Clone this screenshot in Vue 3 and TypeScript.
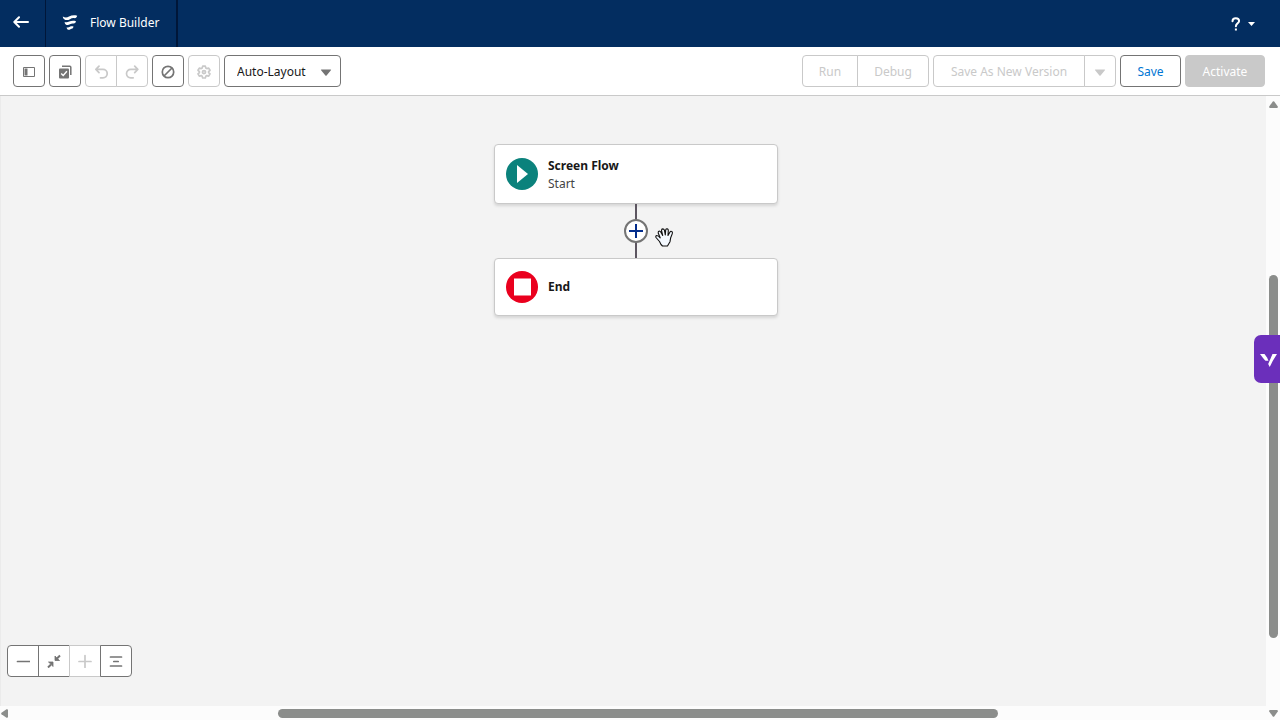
<script setup lang="ts">
import { ref } from 'vue'

const layout = ref('auto')
</script>

<template>
  <div class="app">
    <header class="header">
      <button class="back" type="button" aria-label="Back">
        <svg width="16" height="12" viewBox="0 0 16 12" fill="none" stroke="#fff" stroke-width="2" stroke-linecap="round" stroke-linejoin="round">
          <path d="M15 6H1.5M6 1.2 1.3 6 6 10.8" />
        </svg>
      </button>
      <div class="brand">
        <svg width="16" height="16" viewBox="0 0 16 16" fill="#fff">
          <path d="M.8 1.500C3 2.800 5 2.600 7 1.500 9.500.300 12 0 15.200.7 14.800 2.300 14 3.100 12.800 3.200 11 2.800 9.500 3.200 8 4.200 6 5.400 3.500 5.300 2.200 4.200 1.300 3.500.9 2.600.8 1.500Z" />
          <path d="M2.600 6.900C4.200 7.700 5.700 7.400 7.200 6.600 9.200 5.700 11.500 5.500 14 6.200 13.600 7.700 12.800 8.400 11.700 8.500 10.200 8.200 9.200 8.600 8 9.300 6.300 10.300 4.800 10.100 3.700 9.400 3 8.800 2.700 8 2.600 6.900Z" />
          <path d="M4.700 12.200C5.800 12.700 6.800 12.300 7.900 11.700 9 11.200 10.200 11.100 11.500 11.500 11.200 12.900 10.700 13.500 9.900 13.700 9 13.700 8.500 14.200 7.500 14.700 6.700 15 5.900 14.900 5.400 14.300 4.900 13.700 4.700 13 4.700 12.200Z" />
        </svg>
        <h1>Flow Builder</h1>
      </div>
      <button class="help" type="button" aria-label="Help">
        <svg width="10" height="14" viewBox="0 0 10 14" fill="none" stroke="#fff" stroke-width="2">
          <path d="M1.500 4.200C1.500 2.400 2.900 1.200 4.800 1.200s3.300 1.100 3.300 2.800c0 2.300-3.200 2.500-3.200 5.300" stroke-linecap="round" />
          <path d="M4.900 11.500v2" />
        </svg>
        <svg width="7" height="4" viewBox="0 0 7 4" fill="#fff"><path d="M0 0h7L3.500 4Z" /></svg>
      </button>
    </header>

    <div class="toolbar">
      <button class="btn icon" type="button" aria-label="Toggle Toolbox">
        <svg width="12" height="10" viewBox="0 0 12 10"><path d="M.5.500h11v9H.5Z" fill="none" stroke="#747474" /><path d="M1.500 1.500h3v7h-3Z" fill="#747474" /></svg>
      </button>
      <button class="btn icon" type="button" aria-label="Select Elements">
        <svg width="14" height="14" viewBox="0 0 14 14">
          <path d="M4 1.200h7.800a1 1 0 0 1 1 1V10" fill="none" stroke="#747474" stroke-width="1.500" />
          <rect x="1" y="3.500" width="10" height="10" rx="1" fill="#747474" />
          <path d="m3.200 8.500 2 2 3.700-4.200" fill="none" stroke="#fff" stroke-width="1.400" />
        </svg>
      </button>
      <div class="group">
        <button class="btn icon" type="button" disabled aria-label="Undo">
          <svg width="14" height="14" viewBox="0 0 14 14" fill="none" stroke="#c9c9c9" stroke-width="1.700" stroke-linecap="round" stroke-linejoin="round"><path d="M5 1.200 1.900 4.400 5 7.600M2.200 4.400H9a4.200 4.200 0 0 1 0 8.400H6.500" /></svg>
        </button>
        <button class="btn icon" type="button" disabled aria-label="Redo">
          <svg width="14" height="14" viewBox="0 0 14 14" fill="none" stroke="#c9c9c9" stroke-width="1.700" stroke-linecap="round" stroke-linejoin="round"><path d="m9.700 1.200 3.100 3.200-3.100 3.200M12.500 4.400H5.700a4.200 4.200 0 0 0 0 8.400h2.500" /></svg>
        </button>
      </div>
      <button class="btn icon" type="button" aria-label="Show Errors">
        <svg width="14" height="14" viewBox="0 0 14 14" fill="none" stroke="#747474" stroke-width="1.700"><circle cx="7" cy="7" r="5.700" /><path d="m3 11 8-8" /></svg>
      </button>
      <button class="btn icon" type="button" disabled aria-label="View Properties">
        <svg width="14" height="14" viewBox="0 0 14 14" fill="none" stroke="#c9c9c9" stroke-linejoin="round">
          <path d="M5.700 1.100h2.600l.5 1.900 1 .6 1.900-.5L13 5.300 11.600 6.700v.9L13 8.900l-1.300 2.200-1.900-.5-1 .6-.5 1.800H5.700l-.5-1.800-1-.6-1.900.5L1 8.900l1.400-1.300v-.9L1 5.300l1.300-2.200 1.900.5 1-.6Z" stroke-width="1.700" />
          <circle cx="7" cy="7.100" r="1.500" stroke-width="1.800" />
        </svg>
      </button>
      <div class="picker">
        <select v-model="layout" class="btn" aria-label="Layout mode">
          <option value="auto">Auto-Layout</option>
          <option value="free">Free-Form</option>
        </select>
        <svg width="12" height="7" viewBox="0 0 12 7" fill="#747474"><path d="M1.500.500h9q1 0 .4.800L6.600 6.500q-.6.600-1.200 0L1.100 1.300q-.6-.8.4-.8Z" /></svg>
      </div>

      <div class="group actions">
        <button class="btn run" type="button" disabled>Run</button>
        <button class="btn debug" type="button" disabled>Debug</button>
      </div>
      <div class="group">
        <button class="btn version" type="button" disabled>Save As New Version</button>
        <button class="btn icon" type="button" disabled aria-label="More save options">
          <svg width="12" height="7" viewBox="0 0 12 7" fill="#c9c9c9"><path d="M1.500.500h9q1 0 .4.800L6.600 6.500q-.6.600-1.200 0L1.100 1.300q-.6-.8.4-.8Z" /></svg>
        </button>
      </div>
      <button class="btn save" type="button">Save</button>
      <button class="btn activate" type="button" disabled>Activate</button>
    </div>

    <div class="workspace">
      <main class="canvas">
        <section class="node start">
          <svg width="32" height="32" viewBox="0 0 32 32"><circle cx="16" cy="16" r="16" fill="#0b827c" /><path d="M11 7v18l11-9Z" fill="#fff" /></svg>
          <div>
            <h2>Screen Flow</h2>
            <p>Start</p>
          </div>
        </section>
        <div class="connector">
          <button class="add" type="button" aria-label="Add Element">
            <svg width="14" height="14" viewBox="0 0 14 14" stroke="#032d8c" stroke-width="2"><path d="M7 0v14M0 7h14" /></svg>
          </button>
          <svg class="hand" width="19" height="19" viewBox="0 0 19 19">
            <path d="M6 16.500 4.500 13.500 1 9.500Q.300 7.800 1.800 7.500q1.500 0 3.400 2.300L3.200 5Q3 3.300 4.300 3q1 0 1.600 1.200L7.700 7.500 6.500 2.500Q6.500 1 7.700.900q1.300 0 1.700 1.300l.9 4.800.4-5Q11 .600 12.300.900q1.100.3 1 1.600L13 7.500 15 4Q15.900 2.800 17 3.700q.7.700.3 1.900l-1.600 4.100-.7 4-1.800 3L12.500 18H7.500Z" fill="#f4f9ff" stroke="#111" stroke-width="1.100" stroke-linejoin="round" />
          </svg>
        </div>
        <section class="node end">
          <svg width="32" height="32" viewBox="0 0 32 32"><circle cx="16" cy="16" r="16" fill="#ea001e" /><path d="M8 7.500h17v17H8Z" fill="#fff" /></svg>
          <h2>End</h2>
        </section>

        <div class="group zoom">
          <button class="btn icon" type="button" aria-label="Zoom Out">
            <svg width="14" height="14" viewBox="0 0 14 14" stroke="#747474" stroke-width="1.700" stroke-linecap="round"><path d="M1.500 7.500h12" /></svg>
          </button>
          <button class="btn icon" type="button" aria-label="Zoom to Fit">
            <svg width="14" height="14" viewBox="0 0 14 14" fill="#747474" stroke="#747474"><path d="M8 2v4.500h4.500L11.200 5.200 8.800 3Z M1.500 8H6v4.500L4.800 11 3 9.200Z" stroke-width=".8" /><path d="m10 4.500 3-3M4 10.500l-3 3" stroke-width="2" /></svg>
          </button>
          <button class="btn icon" type="button" disabled aria-label="Zoom In">
            <svg width="14" height="14" viewBox="0 0 14 14" stroke="#c9c9c9" stroke-width="1.700" stroke-linecap="round"><path d="M1 7.500h12M7 1.500v12" /></svg>
          </button>
          <button class="btn icon" type="button" aria-label="Center Flow">
            <svg width="14" height="14" viewBox="0 0 14 14" stroke="#747474" stroke-width="1.700" stroke-linecap="round"><path d="M1.500 3h11M4.800 7.500h4.400M1.500 12h11" /></svg>
          </button>
        </div>
      </main>

      <div class="bar vertical">
        <svg width="9" height="7" viewBox="0 0 9 7"><path d="M3.800.500Q4.500-.2 5.200.5L8.800 5.500Q9 7 8 7H1Q0 7 .2 5.500Z" /></svg>
        <div class="track"><span class="thumb"></span></div>
        <svg width="9" height="7" viewBox="0 0 9 7"><path d="M3.800 6.500Q4.500 7.200 5.200 6.500L8.800 1.500Q9 0 8 0H1Q0 0 .2 1.500Z" /></svg>
      </div>
      <div class="bar horizontal">
        <svg width="7" height="9" viewBox="0 0 7 9"><path d="M.5 3.800Q-.2 4.500.5 5.200L5.500 8.800Q7 9 7 8V1Q7 0 5.500.2Z" /></svg>
        <div class="track"><span class="thumb"></span></div>
      </div>
    </div>

    <button class="tab" type="button" aria-label="Open assistant">
      <svg width="17" height="14" viewBox="0 0 17 14" fill="#fff"><path d="M0 0h4.500l2.500 3.500 1.500 3.200H5.500L3.800 5Z" /><path d="M12.500 0H17l-4.300 7-3 6-1.500-3Z" /></svg>
    </button>
  </div>
</template>

<style>
body {
  margin: 0;
}
</style>

<style scoped>
.app {
  position: relative;
  display: flex;
  flex-direction: column;
  height: 100vh;
  overflow: hidden;
  background: #f3f3f3;
  color: #181818;
  font: 12px/18px "Noto Sans", "Open Sans", sans-serif;
}
button,
select {
  box-sizing: border-box;
  margin: 0;
  padding: 0;
  border: 0;
  font: inherit;
  cursor: pointer;
}
svg {
  display: block;
  flex: none;
}
h1,
h2,
p {
  margin: 0;
  font-size: 12px;
  font-weight: 400;
}
.header {
  display: flex;
  flex: none;
  height: 47px;
  background: #032d60;
  color: #fff;
}
.back,
.brand,
.help {
  display: flex;
  align-items: center;
  background: none;
}
.back {
  width: 46px;
  padding: 0 0 3px 13px;
  border-right: 1px solid #001639;
}
.brand {
  gap: 12px;
  padding: 0 17px 2px 16px;
  border-right: 2px solid #001639;
}
.help {
  gap: 7px;
  margin-left: auto;
  padding: 0 25px 0 0;
}
.toolbar {
  display: flex;
  flex: none;
  align-items: center;
  gap: 4px;
  height: 48px;
  padding: 0 15px 0 13px;
  border-bottom: 1px solid #c9c9c9;
  background: #fff;
}
.btn {
  display: flex;
  align-items: center;
  justify-content: center;
  height: 32px;
  padding-top: 2px;
  border: 1px solid #747474;
  border-radius: 4px;
  background: #fff;
  color: #181818;
  white-space: nowrap;
}
.btn:disabled {
  border-color: #c9c9c9;
  color: #c9c9c9;
  cursor: default;
}
.icon {
  width: 32px;
}
.group {
  display: flex;
}
.group .btn:not(:first-child) {
  margin-left: -1px;
  border-top-left-radius: 0;
  border-bottom-left-radius: 0;
}
.group .btn:not(:last-child) {
  border-top-right-radius: 0;
  border-bottom-right-radius: 0;
}
.picker {
  display: grid;
  align-items: center;
}
.picker > * {
  grid-area: 1 / 1;
}
.picker select {
  width: 117px;
  padding: 2px 12px 0;
  appearance: none;
}
.picker svg {
  margin: 2px 9px 0 0;
  justify-self: end;
  pointer-events: none;
}
.actions {
  margin-left: auto;
}
.run {
  width: 56px;
}
.debug {
  width: 72px;
}
.version {
  width: 152px;
}
.save {
  width: 61px;
  color: #0176d3;
}
.activate:disabled {
  width: 80px;
  background: #c9c9c9;
  color: #fff;
}
.workspace {
  display: grid;
  flex: 1;
  grid-template: minmax(0, 1fr) 14px / minmax(0, 1fr) 14px;
  min-height: 0;
}
.canvas {
  display: flex;
  flex-direction: column;
  align-items: center;
  padding: 48px 0 29px 6px;
  box-shadow: inset 1px 0 #ebebeb;
}
.node {
  display: flex;
  box-sizing: border-box;
  align-items: center;
  gap: 10px;
  width: 284px;
  padding: 0 11px;
  border: 1px solid #c9c9c9;
  border-radius: 4px;
  background: #fff;
  box-shadow: 0 2px 3px rgba(0, 0, 0, 0.12);
}
.start {
  height: 60px;
}
.start div {
  padding-top: 1px;
}
.end {
  height: 58px;
}
.node h2 {
  font-weight: 700;
}
.node p {
  color: #444;
}
.connector {
  position: relative;
  display: flex;
  align-items: center;
  justify-content: center;
  width: 24px;
  height: 54px;
  background: linear-gradient(#5c5560, #5c5560) center / 2px 100% no-repeat;
}
.add {
  display: flex;
  align-items: center;
  justify-content: center;
  width: 24px;
  height: 24px;
  border: 2px solid #747474;
  border-radius: 50%;
  background: #fff;
}
.hand {
  position: absolute;
  top: 24px;
  left: 31px;
}
.zoom {
  align-self: flex-start;
  margin-top: auto;
  margin-left: 1px;
}
.zoom .btn {
  padding-top: 0;
}
.bar {
  display: flex;
  align-items: center;
  background: #fcfcfc;
  fill: #8b8d8b;
}
.vertical {
  grid-area: 1 / 2 / 3 / 3;
  flex-direction: column;
  padding: 5px 0 3px 1px;
}
.horizontal {
  grid-area: 2 / 1;
  padding: 1px 0 0 1px;
}
.track {
  display: flex;
  flex: 1;
}
.vertical .track {
  flex-direction: column;
}
.thumb {
  border-radius: 5px;
  background: #8b8d8b;
}
.vertical .thumb {
  width: 9px;
  height: 60.300%;
  margin: auto 0 72px;
}
.horizontal .thumb {
  width: 57.2%;
  height: 9px;
  margin-left: 21.500%;
}
.tab {
  position: absolute;
  top: 335px;
  right: 0;
  display: flex;
  align-items: center;
  width: 26px;
  height: 48px;
  padding: 3px 0 0 6px;
  border-radius: 7px 0 0 7px;
  background: #6b2fbb;
}
</style>
